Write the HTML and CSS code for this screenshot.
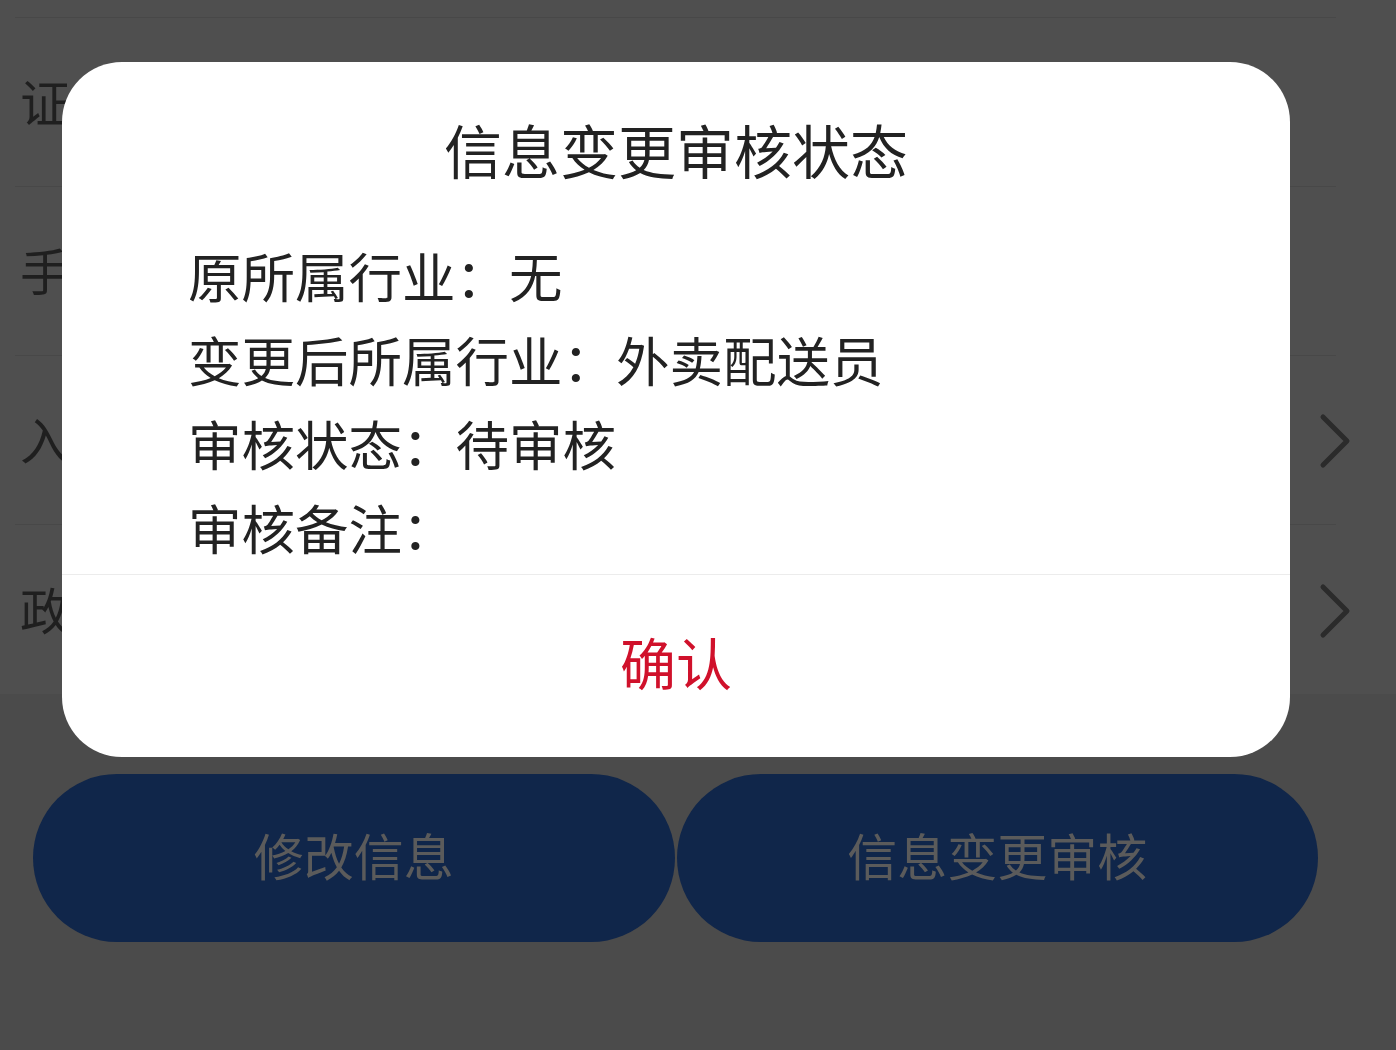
FILE: index.html
```html
<!DOCTYPE html>
<html lang="zh-CN">
<head>
<meta charset="utf-8">
<link rel="stylesheet" href="styles.css">
</head>
<body>
<div class="page">
  <div class="list">
    <div class="row row-top"></div>
    <div class="row"><span class="label">证件号</span></div>
    <div class="row"><span class="label">手机号</span></div>
    <div class="row"><span class="label">入职日</span>
      <svg class="chev" viewBox="0 0 36 60" width="36" height="60"><path d="M6 5 L30 29 L6 53" fill="none" stroke="#2b2b2b" stroke-width="5" stroke-linecap="round" stroke-linejoin="round"/></svg>
    </div>
    <div class="row"><span class="label">政治面</span>
      <svg class="chev" viewBox="0 0 36 60" width="36" height="60"><path d="M6 5 L30 29 L6 53" fill="none" stroke="#2b2b2b" stroke-width="5" stroke-linecap="round" stroke-linejoin="round"/></svg>
    </div>
  </div>
  <div class="actions">
    <div class="btn">修改信息</div>
    <div class="btn">信息变更审核</div>
  </div>
</div>

<div class="modal">
  <div class="modal-title">信息变更审核状态</div>
  <div class="modal-body">
    <div class="line">原所属行业：无</div>
    <div class="line">变更后所属行业：外卖配送员</div>
    <div class="line">审核状态：待审核</div>
    <div class="line">审核备注：</div>
  </div>
  <div class="modal-footer">确认</div>
</div>
</body>
</html>
```

FILE: styles.css
```css
* { box-sizing: border-box; }
html, body {
  margin: 0;
  padding: 0;
  width: 1396px;
  height: 1050px;
  overflow: hidden;
  background: #4b4b4b;
  font-family: "Noto Sans CJK SC", "Noto Sans", sans-serif;
}
.page {
  width: 1396px;
  height: 1050px;
  display: flex;
  flex-direction: column;
}
.list {
  background: #4f4f4f;
  padding: 0 60px 0 15px;
}
.row {
  height: 169px;
  border-bottom: 1px solid #484848;
  display: flex;
  align-items: center;
  justify-content: space-between;
  padding-left: 5px;
}
.row:last-child { border-bottom: none; }
.row-top { height: 18px; }
.label {
  font-size: 50px;
  color: #1f1f1f;
  white-space: nowrap;
  margin-top: -4px;
}
.chev {
  margin-right: -17px;
  margin-top: 4px;
}
.actions {
  display: flex;
  gap: 2px;
  padding: 80px 78px 0 33px;
}
.btn {
  flex: 1;
  height: 168px;
  border-radius: 84px;
  background: #10264a;
  color: #5b5b5b;
  font-size: 50px;
  display: flex;
  align-items: center;
  justify-content: center;
  padding-bottom: 8px;
}
.modal {
  position: absolute;
  left: 62px;
  top: 62px;
  width: 1228px;
  height: 695px;
  background: #ffffff;
  border-radius: 60px;
  display: flex;
  flex-direction: column;
  overflow: hidden;
}
.modal-title {
  padding-top: 47px;
  height: 171px;
  line-height: 80px;
  font-size: 58px;
  text-align: center;
  color: #222222;
}
.modal-body {
  padding: 0 0 5px 126px;
  border-bottom: 1px solid #ececec;
}
.line {
  font-size: 53.5px;
  line-height: 84px;
  color: #222222;
  white-space: nowrap;
}
.modal-footer {
  flex: 1;
  display: flex;
  align-items: center;
  justify-content: center;
  font-size: 56px;
  color: #d0112b;
  padding-bottom: 12px;
}
```
